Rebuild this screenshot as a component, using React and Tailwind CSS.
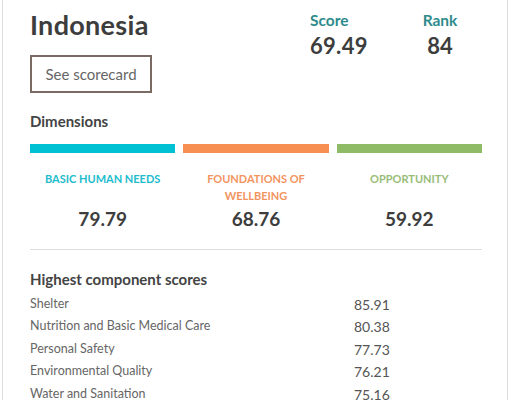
const dimensions = [
  { name: 'BASIC HUMAN NEEDS', lines: ['BASIC HUMAN NEEDS'], score: '79.79', bar: 'bg-[#00c1d4]', text: 'text-[#21bccd]' },
  { name: 'FOUNDATIONS OF WELLBEING', lines: ['FOUNDATIONS OF', 'WELLBEING'], score: '68.76', bar: 'bg-[#f88f52]', text: 'text-[#f3945f]' },
  { name: 'OPPORTUNITY', lines: ['OPPORTUNITY'], score: '59.92', bar: 'bg-[#8fbb66]', text: 'text-[#98bd78]' },
];

const components = [
  { name: 'Shelter', score: '85.91' },
  { name: 'Nutrition and Basic Medical Care', score: '80.38' },
  { name: 'Personal Safety', score: '77.73' },
  { name: 'Environmental Quality', score: '76.21' },
  { name: 'Water and Sanitation', score: '75.16' },
];

export default function App() {
  return (
    <div className="w-[511px] h-[400px] overflow-hidden bg-white pl-[2px] font-['Lato',sans-serif]">
      <div className="w-[506px] h-full border-x border-[#dcdcdc] pl-[27px] pr-[26px]">
        {/* header */}
        <div className="flex pt-[9px]">
          <div className="w-[280px]">
            <h1 className="text-[27px] leading-[32px] font-bold tracking-[0.3px] text-[#3d3d3d]">Indonesia</h1>
            <button className="mt-[14px] w-[122px] h-[38px] border-2 border-[#7b6a61] text-[15px] text-[#666]">
              See scorecard
            </button>
          </div>
          <div className="flex pt-[1px]">
            <div className="w-[100px] text-left">
              <div className="text-[15.5px] leading-[20px] font-bold text-[#2e8b8c]">Score</div>
              <div className="mt-[3px] text-[22px] leading-[26px] font-bold tracking-[0.3px] text-[#3d3d3d]">69.49</div>
            </div>
            <div className="w-[60px] text-center">
              <div className="text-[15.5px] leading-[20px] font-bold text-[#2e8b8c]">Rank</div>
              <div className="mt-[3px] text-[22px] leading-[26px] font-bold text-[#3d3d3d]">84</div>
            </div>
          </div>
        </div>

        {/* dimensions */}
        <h2 className="mt-[19px] text-[15px] leading-[18px] font-bold text-[#444]">Dimensions</h2>
        <div className="mt-[14px] grid grid-cols-3 gap-x-[8px] w-[452px]">
          {dimensions.map((d) => (
            <div key={d.name} className="flex flex-col items-center">
              <div className={`w-full h-[9px] ${d.bar}`} />
              <div className={`mt-[17px] h-[36px] text-center text-[11px] leading-[17px] font-bold ${d.text}`}>
                {d.lines.map((l) => (
                  <div key={l}>{l}</div>
                ))}
              </div>
              <div className="mt-[2px] text-[19px] leading-[22px] font-bold text-[#3d3d3d]">{d.score}</div>
            </div>
          ))}
        </div>
        <div className="mt-[19px] w-[452px] border-t border-[#dedede]" />

        {/* component scores */}
        <h2 className="mt-[20px] text-[15px] leading-[18px] font-bold text-[#444]">Highest component scores</h2>
        <div className="mt-[5px]">
          {components.map((c) => (
            <div key={c.name} className="flex items-center h-[22.5px]">
              <div className="w-[324px] text-[12.5px] text-[#666]">{c.name}</div>
              <div className="text-[14px] text-[#555]">{c.score}</div>
            </div>
          ))}
        </div>
      </div>
    </div>
  );
}
